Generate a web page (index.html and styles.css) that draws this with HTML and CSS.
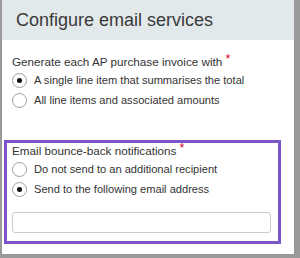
FILE: index.html
```html
<!DOCTYPE html>
<html lang="en">
<head>
  <meta charset="UTF-8" />
  <title>Configure email services</title>
  <link rel="stylesheet" href="styles.css">
</head>
<body>

  <div class="panel">
    <div class="panel-header">
      <h1>Configure email services</h1>
    </div>

    <div class="panel-body">
      <!-- Invoice lines -->
      <div class="grupo">
        <div class="etiqueta">Generate each AP purchase invoice with <span class="req">*</span></div>
        <label class="opcion"><input type="radio" name="lineas" checked><span class="radio"></span>A single line item that summarises the total</label>
        <label class="opcion"><input type="radio" name="lineas"><span class="radio"></span>All line items and associated amounts</label>
      </div>

      <!-- Bounce-back -->
      <div class="grupo resaltado">
        <div class="etiqueta">Email bounce-back notifications <span class="req">*</span></div>
        <label class="opcion"><input type="radio" name="rebote"><span class="radio"></span>Do not send to an additional recipient</label>
        <label class="opcion"><input type="radio" name="rebote" checked><span class="radio"></span>Send to the following email address</label>
        <input type="text" class="campo">
      </div>
    </div>
  </div>

</body>
</html>
```

FILE: styles.css
```css
body {
  margin: 0;
  background-color: #ffffff;
  font-family: 'Liberation Sans', Arial, sans-serif;
  color: #333333;
}

.panel {
  width: 292px;
  height: 254px;
  border-left: 2px solid #9a9a9a;
  border-right: 6px solid #9a9a9a;
  border-bottom: 4px solid #9a9a9a;
  background-color: #ffffff;
}

.panel-header {
  height: 40px;
  background-color: #e2e9eb;
  display: flex;
  align-items: center;
  padding-left: 14px;
}

h1 {
  margin: 0;
  font-size: 18px;
  font-weight: normal;
  color: #3a3a3a;
}

.panel-body {
  padding-top: 14px;
}

.grupo {
  padding-left: 10px;
}

.etiqueta {
  font-size: 11.7px;
  line-height: 15px;
}

.req {
  color: #d0021b;
  font-size: 12.5px;
  position: relative;
  top: -3px;
}

.opcion {
  display: flex;
  align-items: center;
  height: 20px;
  font-size: 11.1px;
  cursor: pointer;
}

.opcion input {
  display: none;
}

.radio {
  width: 13px;
  height: 13px;
  border: 1px solid #9e9e9e;
  border-radius: 50%;
  margin-right: 7px;
  display: flex;
  align-items: center;
  justify-content: center;
  background-color: #fff;
}

.opcion input:checked + .radio::after {
  content: "";
  width: 5px;
  height: 5px;
  border-radius: 50%;
  background-color: #111;
}

.resaltado {
  margin-top: 30px;
  margin-left: 2px;
  width: 266px;
  border: 3px solid #7b55c9;
  padding: 0 0 8px 5px;
}

.campo {
  display: block;
  margin-top: 13px;
  width: 259px;
  height: 21px;
  box-sizing: border-box;
  border: 1px solid #c6cfd2;
  border-radius: 3px;
  padding: 0;
}
```
